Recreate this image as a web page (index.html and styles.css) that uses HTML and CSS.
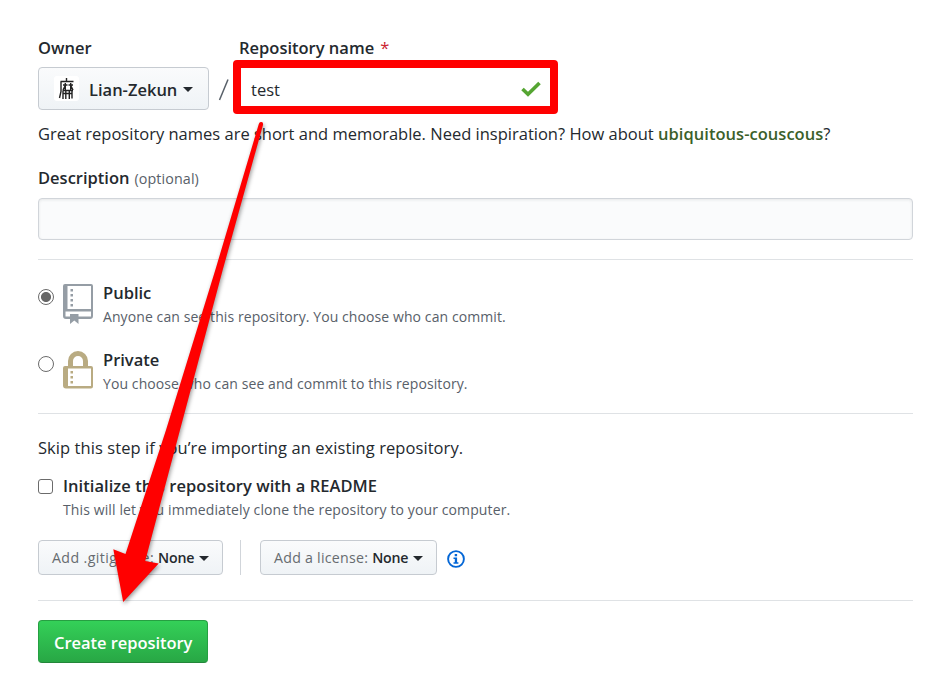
FILE: index.html
```html
<!DOCTYPE html>
<html lang="en">
<head>
<meta charset="utf-8">
<title>Create a new repository</title>
<link rel="stylesheet" href="styles.css">
</head>
<body>
<main class="page">
  <div class="name-row">
    <div class="owner">
      <div class="label"><span class="t-owner">Owner</span></div>
      <button class="btn owner-btn" type="button">
        <svg class="avatar" viewBox="0 0 25 25"><rect width="25" height="25" rx="3" fill="#fff"/><g fill="none" stroke="#222" stroke-width="1.400"><path d="M12.5 2v3M6.500 5.500h13M7 5.500v10L5.500 22"/><path d="M9 9h4.500M14.500 9h4.500M11.300 7v7M16.700 7v7M11 10l-2 4M17 10l2 4M8.500 14.500h10.500M9 17.500h9.500M9 15v8M11.800 14v9M15.300 14v9M18 15v7.500"/></g></svg>
        <span class="t-user">Lian-Zekun</span><i class="caret"></i>
      </button>
    </div>
    <svg class="slash" viewBox="0 0 12 24"><path d="M1.500 22L10 1.500" stroke="#586069" stroke-width="1.500"/></svg>
    <div class="repo">
      <div class="label repo-label"><span class="t-repo">Repository name</span><span class="star">*</span></div>
      <div class="name-input"><span class="t-test">test</span>
        <svg class="check" viewBox="0 0 20 16"><path d="M1.500 8l5.500 5.300L18.500 2" fill="none" stroke="#55a532" stroke-width="3.600"/></svg>
      </div>
    </div>
  </div>
  <p class="hint"><span class="t-hint">Great repository names are short and memorable. Need inspiration? How about </span><strong class="t-name">ubiquitous-couscous</strong>?</p>
  <div class="label desc"><span class="t-desc">Description</span><span class="optional">(optional)</span></div>
  <div class="field"></div>
  <hr class="rule first">
  <div class="choice public">
    <i class="radio on"></i>
    <svg class="repo-icon" viewBox="0 0 30 40"><path fill="#959da5" fill-rule="evenodd" d="M2 0h26q2 0 2 2v30q0 3-3 3H15.500v5l-4.200-3.500L7 40v-5H3q-3 0-3-3V2Q0 0 2 0zM4.500 2v23H28V2zM2.500 27.500v5H7V30h8.500v2.500H28v-5zM7.500 5h2.500v2.500H7.500zM7.500 10h2.500v2.500H7.500zM7.500 15h2.500v2.500H7.500zM7.500 20h2.500v2.500H7.500z"/></svg>
    <div><div class="title"><span class="t-public">Public</span></div><div class="note"><span class="t-anyone">Anyone can see this repository. You choose who can commit.</span></div></div>
  </div>
  <div class="choice">
    <i class="radio"></i>
    <svg class="lock-icon" viewBox="0 0 30 38"><path d="M7.500 17V10a7.500 7.500 0 0 1 15 0v7" fill="none" stroke="#b9ab82" stroke-width="5"/><path fill="#b9ab82" fill-rule="evenodd" d="M2 15h26q2 0 2 2v18.500q0 2-2 2H3q-3 0-3-3V17q0-2 2-2zM5 17.500V35h23V17.500zM7.500 20h2.500v2.500H7.500zM7.500 25h2.500v2.500H7.500zM7.500 30h2.500v2.500H7.500z"/></svg>
    <div><div class="title"><span class="t-private">Private</span></div><div class="note"><span class="t-you">You choose who can see and commit to this repository.</span></div></div>
  </div>
  <hr class="rule">
  <p class="skip"><span class="t-skip">Skip this step if you’re importing an existing repository.</span></p>
  <div class="init">
    <i class="checkbox"></i>
    <div><div class="title"><span class="t-init">Initialize this repository with a README</span></div><div class="note"><span class="t-clone">This will let you immediately clone the repository to your computer.</span></div></div>
  </div>
  <div class="pickers">
    <button class="btn git" type="button"><span class="muted t-git">Add .gitignore:</span><span class="t-none">None</span><i class="caret"></i></button>
    <i class="divider"></i>
    <button class="btn lic" type="button"><span class="muted t-lic">Add a license:</span><span class="t-none">None</span><i class="caret"></i></button>
    <svg class="info" viewBox="0 0 18 18"><circle cx="9" cy="9" r="7.900" fill="none" stroke="#0366d6" stroke-width="1.900"/><path fill="#0366d6" d="M7.700 4h2.400v2.200H7.700zM6.500 7.500h3.600v4.700h1.300V13.700H6.500v-1.500h1.300V9H6.500z"/></svg>
  </div>
  <hr class="rule last">
  <button class="btn create" type="button"><span class="t-create">Create repository</span></button>
</main>
<svg class="arrow" viewBox="0 0 940 688"><path d="M258.800 124Q259.500 121.500 261.500 122Q263.500 122.300 263 125L222.700 270L180 430L145.200 561L158.700 563.500L123.200 602L113.300 549.200L125.500 554L166 430L215.300 270Z" fill="#f00"/></svg>
</body>
</html>
```
FILE: styles.css
```css
* { box-sizing: border-box; }
body { margin: 0; background: #fff; color: #24292e; font: 16.5px/26px "Open Sans", "Noto Sans", sans-serif; }
p { margin: 0; }
span { white-space: pre; }
svg { display: block; flex: none; }
.page { display: flex; flex-direction: column; padding: 35px 27px 0 38px; width: 940px; height: 688px; }
.name-row { display: flex; height: 79px; flex: none; }
.owner { width: 171px; }
.label, .title { font-weight: 600; line-height: 26px; height: 26px; }
.btn { display: flex; align-items: center; border: 1px solid #c6cbd1; border-radius: 4px; background: linear-gradient(#fafbfc, #eff3f6); color: #24292e; font: 600 16.5px/24px "Open Sans", "Noto Sans", sans-serif; padding: 0; flex: none; }
.owner-btn { width: 171px; height: 43px; margin-top: 6px; padding-left: 15px; }
.avatar { width: 25px; height: 25px; margin-right: 10px; }
.t-user { padding-top: 2px; }
.caret { border: 5px solid transparent; border-top-color: currentColor; border-bottom: 0; margin: 2px 0 0 5px; }
.owner-btn .caret { margin-left: 6px; }
.slash { width: 12px; height: 24px; margin: 43px 2px 0 9px; }
.repo { width: 325px; margin-left: 1px; }
.repo-label { padding-left: 6px; }
.star { color: #cb2431; font-weight: 400; margin-left: 6px; }
.name-input { height: 54px; margin-top: -1px; border: 8px solid #f00; border-radius: 4px; display: flex; align-items: center; padding: 3px 9px 0 10px; justify-content: space-between; }
.t-test { padding-top: 2px; }
.check { width: 20px; height: 16px; }
.hint { height: 26px; margin-top: 7px; white-space: nowrap; }
.t-name { color: #3b5f2b; font-weight: 600; letter-spacing: .03px; }
.desc { margin-top: 18px; }
.optional { color: #586069; font-size: 14.3px; font-weight: 400; margin-left: 5px; letter-spacing: .1px; }
.field { height: 42px; margin-top: 7px; border: 1px solid #d1d5da; border-radius: 4px; background: #fafbfc; box-shadow: inset 0 1px 3px rgba(27,31,35,.09); flex: none; }
.rule { width: 100%; height: 1px; border: 0; background: #dfe2e5; margin: 0; flex: none; }
.first { margin-top: 19px; }
.choice { display: flex; height: 67px; flex: none; }
.public { margin-top: 20px; }
.radio { width: 16px; height: 16px; border: 1px solid #6b6b6b; border-radius: 50%; margin: 9px 9px 0 0; flex: none; }
.on { background: radial-gradient(circle, #666 0 4.600px, #fff 5.400px); }
.repo-icon { width: 30px; height: 40px; margin: 4px 10px 0 0; }
.lock-icon { width: 30px; height: 38px; margin: 4px 10px 0 0; }
.note { color: #586069; font-size: 14px; line-height: 22px; letter-spacing: .09px; }
.t-clone { letter-spacing: .115px; }
.choice + .rule { margin-top: -1px; }
.skip { margin-top: 21px; height: 26px; letter-spacing: .07px; }
.init { display: flex; margin-top: 12px; height: 48px; }
.t-init { letter-spacing: .04px; }
.checkbox { width: 15px; height: 15px; border: 1px solid #6b6b6b; border-radius: 3px; margin: 6px 10px 0 0; flex: none; }
.pickers { display: flex; align-items: center; height: 35px; margin-top: 19px; flex: none; }
.pickers .btn { height: 35px; padding-left: 13px; font-size: 14.2px; }
.git { width: 185px; }
.lic { width: 177px; }
.muted { color: #666b70; font-weight: 500; margin-right: 4px; }
.t-git { letter-spacing: .4px; }
.t-lic { letter-spacing: .25px; }
.t-none { letter-spacing: -.2px; }
.divider { width: 1px; height: 35px; background: #d1d5da; margin: 0 19px 0 17px; }
.info { width: 18px; height: 18px; margin: 2px 0 0 10px; }
.last { margin-top: 25px; }
.create { width: 170px; height: 43px; margin-top: 19px; border-color: #269f42 #269f42 #23863a; background: linear-gradient(#34d058, #28a745); color: #fff; padding: 2px 0 0 15px; letter-spacing: -.05px; }
.arrow { position: absolute; inset: 0; width: 940px; height: 688px; pointer-events: none; filter: drop-shadow(1px 2px 2px rgba(0,0,0,.4)); }
```
